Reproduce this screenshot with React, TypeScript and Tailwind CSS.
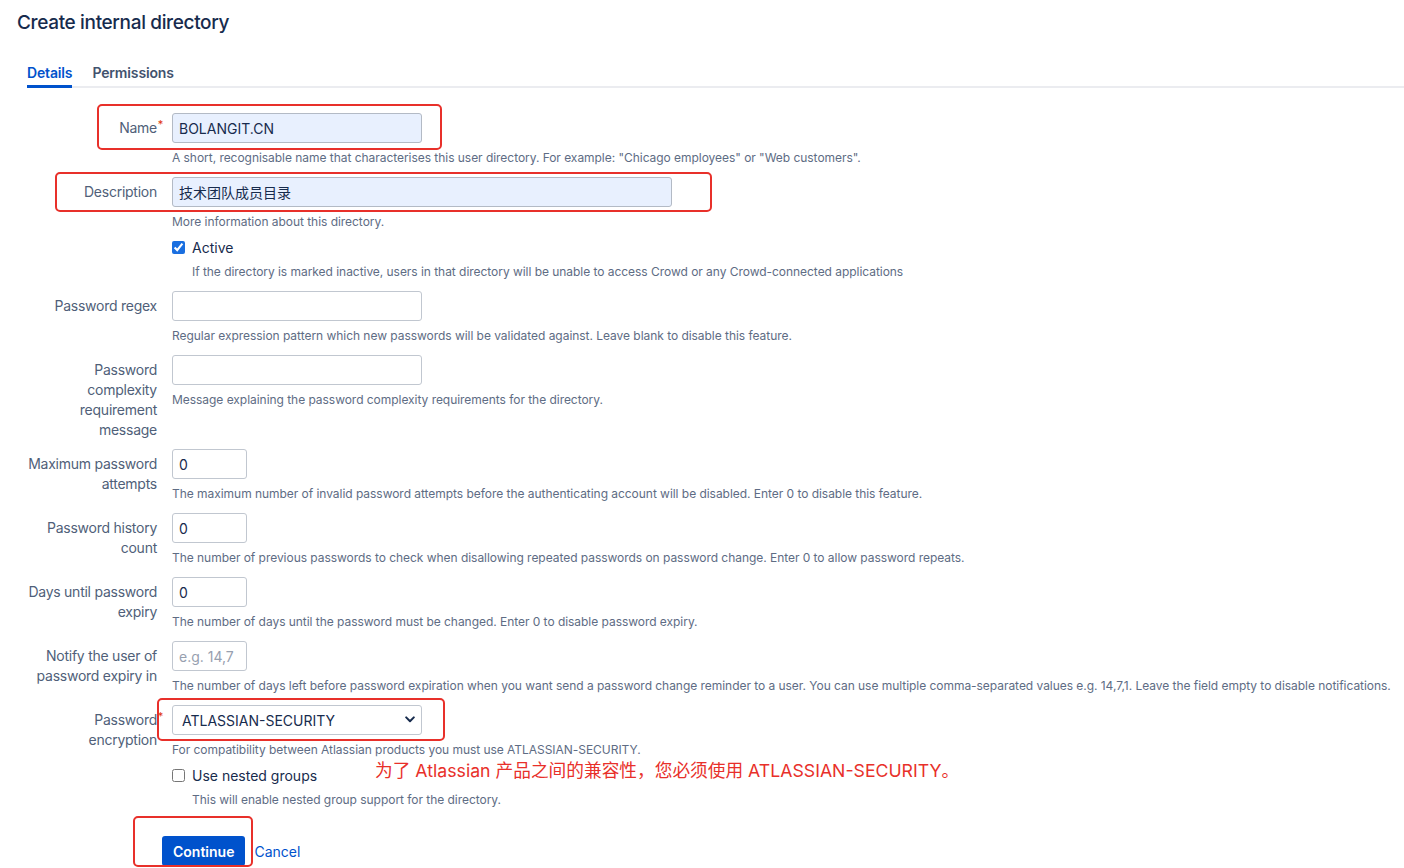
import React from "react";

const font = { fontFamily: "Inter, 'Noto Sans CJK SC', sans-serif" };

type RowProps = {
  label: string[];
  required?: boolean;
  className?: string;
  children: React.ReactNode;
};

function Row({ label, required, className, children }: RowProps) {
  return (
    <div className={`flex ${className ?? "mb-[9px]"}`}>
      <div className="w-[157px] shrink-0 pt-[5px] text-right text-[14px] leading-5 tracking-[-0.25px] text-[#505f79] whitespace-nowrap">
        {label.map((line, i) => (
          <div key={i}>
            <span className="relative">
              {line}
              {required && i === 0 && (
                <span className="absolute -right-[6px] -top-[5px] text-[11px] text-[#de350b]">*</span>
              )}
            </span>
          </div>
        ))}
      </div>
      <div className="ml-[15px] flex-1">{children}</div>
    </div>
  );
}

function Help({ children, indent }: { children: React.ReactNode; indent?: boolean }) {
  return (
    <p
      className={`mt-[5px] text-[12px] leading-5 tracking-[-0.04px] text-[#5e6c84] whitespace-nowrap ${
        indent ? "ml-[20px]" : ""
      }`}
    >
      {children}
    </p>
  );
}

function TextInput({
  value,
  placeholder,
  width,
  filled,
}: {
  value?: string;
  placeholder?: string;
  width: "sm" | "md" | "lg";
  filled?: boolean;
}) {
  const w = width === "sm" ? "w-[75px]" : width === "md" ? "w-[250px]" : "w-[500px]";
  return (
    <input
      readOnly
      defaultValue={value}
      placeholder={placeholder}
      className={`${w} h-[30px] rounded-[3px] border px-[6px] text-[14px] text-[#172b4d] outline-none placeholder:text-[#97a0af] ${
        filled ? "border-[#b3bac5] bg-[#e8f0fe]" : "border-[#c1c7d0] bg-white"
      }`}
      style={font}
    />
  );
}

function Check({ checked, label }: { checked?: boolean; label: string }) {
  return (
    <label className="flex h-5 items-center text-[14px] text-[#172b4d]">
      <input
        type="checkbox"
        readOnly
        checked={checked}
        className="m-0 mr-[7px] h-[13px] w-[13px] accent-[#1a6fe0]"
      />
      {label}
    </label>
  );
}

export default function App() {
  return (
    <div className="relative h-[868px] w-[1404px] overflow-hidden bg-white" style={font}>
      <h1 className="pl-[17px] pt-[11px] text-[19px] font-medium leading-6 tracking-[-0.35px] text-[#172b4d]">
        Create internal directory
      </h1>

      <div className="ml-[27px] mt-[27px] flex gap-5 border-b-2 border-[#ebecf0] text-[14px] font-semibold tracking-[-0.15px]">
        <div className="-mb-[2px] border-b-[3px] border-[#0052cc] pb-[2px] text-[#0052cc]">Details</div>
        <div className="pb-[2px] text-[#42526e]">Permissions</div>
      </div>

      <form className="mt-[25px]">
        <Row label={["Name"]} required>
          <TextInput value="BOLANGIT.CN" width="md" filled />
          <Help>
            A short, recognisable name that characterises this user directory. For example: "Chicago employees" or "Web
            customers".
          </Help>
        </Row>

        <Row label={["Description"]} className="mb-[5px]">
          <TextInput value="技术团队成员目录" width="lg" filled />
          <Help>More information about this directory.</Help>
        </Row>

        <div className="mb-[9px] ml-[172px]">
          <Check checked label="Active" />
          <Help indent>
            If the directory is marked inactive, users in that directory will be unable to access Crowd or any
            Crowd-connected applications
          </Help>
        </div>

        <Row label={["Password regex"]}>
          <TextInput width="md" />
          <Help>Regular expression pattern which new passwords will be validated against. Leave blank to disable this feature.</Help>
        </Row>

        <Row label={["Password", "complexity", "requirement", "message"]}>
          <TextInput width="md" />
          <Help>Message explaining the password complexity requirements for the directory.</Help>
        </Row>

        <Row label={["Maximum password", "attempts"]}>
          <TextInput value="0" width="sm" />
          <Help>
            The maximum number of invalid password attempts before the authenticating account will be disabled. Enter 0
            to disable this feature.
          </Help>
        </Row>

        <Row label={["Password history", "count"]}>
          <TextInput value="0" width="sm" />
          <Help>
            The number of previous passwords to check when disallowing repeated passwords on password change. Enter 0 to
            allow password repeats.
          </Help>
        </Row>

        <Row label={["Days until password", "expiry"]}>
          <TextInput value="0" width="sm" />
          <Help>The number of days until the password must be changed. Enter 0 to disable password expiry.</Help>
        </Row>

        <Row label={["Notify the user of", "password expiry in"]}>
          <TextInput placeholder="e.g. 14,7" width="sm" />
          <Help>
            The number of days left before password expiration when you want send a password change reminder to a user.
            You can use multiple comma-separated values e.g. 14,7,1. Leave the field empty to disable notifications.
          </Help>
        </Row>

        <Row label={["Password", "encryption"]} required className="mb-[5px]">
          <div className="relative w-[250px]">
            <select
              defaultValue="ATLASSIAN-SECURITY"
              className="h-[30px] w-[250px] appearance-none rounded-[3px] border border-[#c1c7d0] bg-white pl-[9px] text-[14px] text-[#172b4d] outline-none"
              style={font}
            >
              <option>ATLASSIAN-SECURITY</option>
            </select>
            <svg
              className="pointer-events-none absolute right-[7px] top-[11px]"
              width="10"
              height="7"
              viewBox="0 0 10 7"
              fill="none"
            >
              <path d="M1.2 1.4L5 5.2L8.8 1.4" stroke="#172b4d" strokeWidth="2" strokeLinecap="round" strokeLinejoin="round" />
            </svg>
          </div>
          <Help>For compatibility between Atlassian products you must use ATLASSIAN-SECURITY.</Help>
        </Row>

        <div className="ml-[172px]">
          <Check label="Use nested groups" />
          <Help indent>This will enable nested group support for the directory.</Help>
        </div>

        <div className="ml-[162px] mt-[26px] flex items-center gap-[9px]">
          <button
            type="button"
            className="h-[30px] rounded-[3px] bg-[#0052cc] px-[11px] text-[14px] font-semibold text-white"
          >
            Continue
          </button>
          <a className="text-[14px] text-[#0052cc]">Cancel</a>
        </div>
      </form>

      {/* annotations */}
      <div className="pointer-events-none absolute left-[97px] top-[104px] h-[46px] w-[345px] rounded-[5px] border-2 border-[#e8302a]" />
      <div className="pointer-events-none absolute left-[55px] top-[172px] h-[40px] w-[657px] rounded-[5px] border-2 border-[#e8302a]" />
      <div className="pointer-events-none absolute left-[157px] top-[698px] h-[43px] w-[288px] rounded-[5px] border-2 border-[#e8302a]" />
      <div className="pointer-events-none absolute left-[133px] top-[816px] h-[51px] w-[120px] rounded-[5px] border-2 border-[#e8302a]" />
      <div className="absolute left-[375px] top-[760px] whitespace-nowrap text-[17.7px] leading-[22px] text-[#e8302a]">
        为了 Atlassian 产品之间的兼容性，您必须使用 ATLASSIAN-SECURITY。
      </div>
    </div>
  );
}
